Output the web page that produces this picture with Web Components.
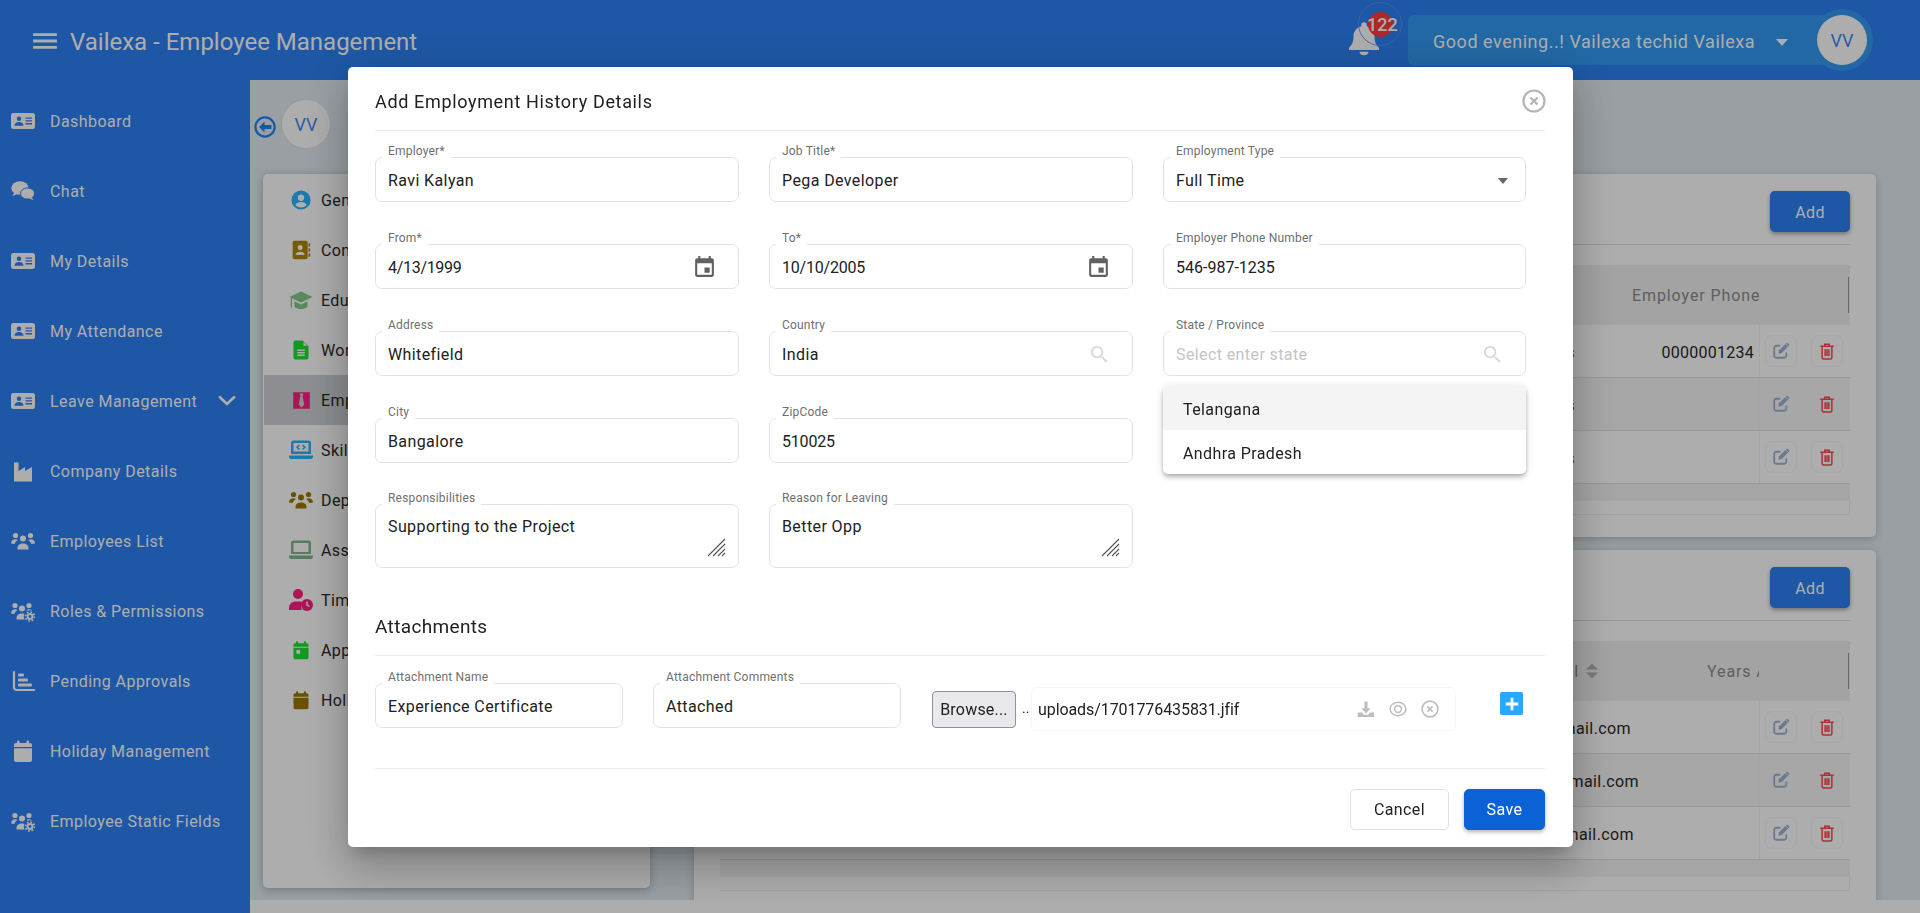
<!DOCTYPE html>
<html lang="en">
<head>
<meta charset="utf-8">
<title>Vailexa - Employee Management</title>
<style>
  html, body { margin: 0; height: 913px; overflow: hidden; }
  body { font-family: Roboto, "Liberation Sans", sans-serif; color: #292929; }
</style>
</head>
<body>

<vx-app>
  <vx-header slot="header"></vx-header>

  <vx-side-nav slot="nav">
    <vx-nav-item icon="idcard">Dashboard</vx-nav-item>
    <vx-nav-item icon="comments">Chat</vx-nav-item>
    <vx-nav-item icon="idcard">My Details</vx-nav-item>
    <vx-nav-item icon="idcard">My Attendance</vx-nav-item>
    <vx-nav-item icon="idcard" expandable>Leave Management</vx-nav-item>
    <vx-nav-item icon="industry">Company Details</vx-nav-item>
    <vx-nav-item icon="users">Employees List</vx-nav-item>
    <vx-nav-item icon="userscog">Roles &amp; Permissions</vx-nav-item>
    <vx-nav-item icon="bars">Pending Approvals</vx-nav-item>
    <vx-nav-item icon="calendar">Holiday Management</vx-nav-item>
    <vx-nav-item icon="userscog">Employee Static Fields</vx-nav-item>
  </vx-side-nav>

  <vx-content slot="main">
    <vx-profile-list slot="left">
      <vx-profile-item icon="usercircle" size="20" tint="#2ab4ff">General</vx-profile-item>
      <vx-profile-item icon="book" size="20" tint="#b08600">Contact</vx-profile-item>
      <vx-profile-item icon="cap" size="24" tint="#84c98c">Edu.</vx-profile-item>
      <vx-profile-item icon="file" size="20" tint="#1ee02e">Work</vx-profile-item>
      <vx-profile-item icon="tie" size="19" tint="#ff1e7f" selected>Employ</vx-profile-item>
      <vx-profile-item icon="laptopcode" size="24" tint="#2ab4ff">Skills</vx-profile-item>
      <vx-profile-item icon="users" size="24" tint="#9e7600">Deps</vx-profile-item>
      <vx-profile-item icon="laptop" size="24" tint="#84b58c">Assets</vx-profile-item>
      <vx-profile-item icon="userclock" size="24" tint="#ff1e7f">Time</vx-profile-item>
      <vx-profile-item icon="calendarbox" size="20" tint="#1ee02e">Apps</vx-profile-item>
      <vx-profile-item icon="calendar" size="20" tint="#9e7600">Holidays</vx-profile-item>
    </vx-profile-list>

    <vx-data-card slot="right" style="height:363px">
      <vx-table-head cols="1fr 184px 91px" first="" second="Employer Phone" inset="57"></vx-table-head>
      <vx-table-row cols="1fr 184px 91px" boxed>Services<span slot="value">0000001234</span></vx-table-row>
      <vx-table-row cols="1fr 184px 91px" even>Services</vx-table-row>
      <vx-table-row cols="1fr 184px 91px" boxed>Services</vx-table-row>
    </vx-data-card>

    <vx-data-card slot="right" style="height:400px">
      <vx-table-head cols="1fr 120px 91px" first="Email" endpad="38" second="Years At Company" inset="68" clip sort></vx-table-head>
      <vx-table-row cols="1fr 120px 91px" boxed pad="8">ravi.kalyan@gmail.com</vx-table-row>
      <vx-table-row cols="1fr 120px 91px" even>ravi.kalyan@gmail.com</vx-table-row>
      <vx-table-row cols="1fr 120px 91px" boxed pad="5">ravi.kalyan@gmail.com</vx-table-row>
    </vx-data-card>
  </vx-content>
</vx-app>

<vx-modal heading="Add Employment History Details">
  <vx-form-grid>
    <vx-field label="Employer*">Ravi Kalyan</vx-field>
    <vx-field label="Job Title*">Pega Developer</vx-field>
    <vx-field label="Employment Type">Full Time<vx-caret slot="trail"></vx-caret></vx-field>

    <vx-field label="From*" style="letter-spacing:-.3px">4/13/1999<vx-icon slot="trail" name="event" size="25" color="#616161"></vx-icon></vx-field>
    <vx-field label="To*" style="letter-spacing:-.2px">10/10/2005<vx-icon slot="trail" name="event" size="25" color="#616161"></vx-icon></vx-field>
    <vx-field label="Employer Phone Number" style="letter-spacing:0">546-987-1235</vx-field>

    <vx-field label="Address">Whitefield</vx-field>
    <vx-field label="Country">India<vx-icon slot="trail" name="search" size="23" color="#d9d9d9"></vx-icon></vx-field>
    <vx-field label="State / Province" placeholder="Select enter state">
      <vx-icon slot="trail" name="search" size="23" color="#d9d9d9"></vx-icon>
      <vx-dropdown slot="popup">
        <vx-option active>Telangana</vx-option>
        <vx-option>Andhra Pradesh</vx-option>
      </vx-dropdown>
    </vx-field>

    <vx-field label="City">Bangalore</vx-field>
    <vx-field label="ZipCode" style="letter-spacing:-.2px">510025</vx-field>
    <span></span>

    <vx-field label="Responsibilities" area>Supporting to the Project</vx-field>
    <vx-field label="Reason for Leaving" area>Better Opp</vx-field>
  </vx-form-grid>

  <vx-attachments>
    <vx-field slot="name" label="Attachment Name">Experience Certificate</vx-field>
    <vx-field slot="comments" label="Attachment Comments">Attached</vx-field>
    <span slot="file">uploads/1701776435831.jfif</span>
  </vx-attachments>

  <vx-button slot="actions" style="width:99px">Cancel</vx-button>
  <vx-button slot="actions" primary style="width:81px">Save</vx-button>
</vx-modal>

<script>
// Icon shapes on a 24 box. Holes come from the evenodd fill.
const ICONS = {
  idcard: '<path fill-rule="evenodd" d="M2.5 4h19A2.5 2.5 0 0 1 24 6.500v11a2.500 2.500 0 0 1-2.500 2.500h-19A2.500 2.500 0 0 1 0 17.500v-11A2.500 2.500 0 0 1 2.500 4z M8 7.500a2.300 2.300 0 1 0 0 4.600 2.300 2.300 0 0 0 0-4.600z M3.500 16.800c0-2.100 1.700-3.700 4.500-3.700s4.500 1.600 4.500 3.700z M14.500 8.500h6.500v1.300h-6.500z M14.500 11.300h6.500v1.300h-6.500z M14.500 14.100h6.500v1.300h-6.500z"/>',
  comments: '<ellipse cx="9" cy="9" rx="8.700" ry="6.700"/><path d="M3.500 13 1.500 17l5-2z"/><ellipse cx="16.500" cy="14.500" rx="7" ry="5.600" stroke="var(--cut,#fff)" stroke-width="1"/><path d="M20 18l3 3-5-1.500z"/>',
  industry: '<path d="M3 3.500h4.500v8.500l6.500-4v4l7-4v14.500H3z"/>',
  users: '<circle cx="12" cy="9.500" r="3"/><path d="M6.500 20.500v-1.600c0-2.600 2.300-4.400 5.500-4.400s5.500 1.800 5.500 4.400v1.600z"/><circle cx="4.500" cy="6.500" r="2.600"/><circle cx="19.500" cy="6.500" r="2.600"/><path d="M0 14.500c0-2.500 1.800-4.300 4.300-4.300 1 0 2 .3 2.600.9-1.500.9-2.800 2.200-3.200 3.900zM24 14.500c0-2.500-1.800-4.300-4.300-4.300-1 0-2 .3-2.600.9 1.500.9 2.800 2.200 3.200 3.900z"/>',
  userscog: '<circle cx="11" cy="9.500" r="3"/><path d="M5.500 20.500v-1.600c0-2.600 2.300-4.400 5.500-4.400s5.500 1.800 5.500 4.400v1.600z"/><circle cx="4" cy="6.500" r="2.600"/><circle cx="18" cy="6.500" r="2.600"/><path d="M0 14.500c0-2.500 1.800-4.300 4-4.300 1 0 2 .3 2.500.9-1.500.9-2.700 2.200-3.100 3.900zM22 14.500c0-2.500-1.800-4.300-4-4.300-1 0-2 .3-2.500.9 1.500.9 2.700 2.200 3.100 3.900z"/><circle cx="19" cy="17.500" r="6.200" fill="var(--cut,#fff)"/><circle cx="19" cy="17.500" r="3.400"/><circle cx="19" cy="17.500" r="4.500" fill="none" stroke="currentColor" stroke-width="1.700" stroke-dasharray="1.700 1.800"/><circle cx="19" cy="17.500" r="1.400" fill="var(--cut,#fff)"/>',
  bars: '<path d="M3 3v15.500a2.500 2.500 0 0 0 2.500 2.500H23" fill="none" stroke="currentColor" stroke-width="2.200" stroke-linecap="round"/><rect x="7" y="4.500" width="6" height="3" rx="1"/><rect x="7" y="9.500" width="10" height="3" rx="1"/><rect x="7" y="14.500" width="14" height="3" rx="1"/>',
  calendar: '<rect x="6" y="1.500" width="2.500" height="5" rx="1"/><rect x="15.500" y="1.500" width="2.500" height="5" rx="1"/><path d="M5 4h14a2 2 0 0 1 2 2v2H3V6a2 2 0 0 1 2-2zM3 9.200h18V21a2 2 0 0 1-2 2H5a2 2 0 0 1-2-2z"/>',
  calendarbox: '<rect x="6" y="1.500" width="2.500" height="5" rx="1"/><rect x="15.500" y="1.500" width="2.500" height="5" rx="1"/><path d="M5 4h14a2 2 0 0 1 2 2v2H3V6a2 2 0 0 1 2-2z"/><path fill-rule="evenodd" d="M3 9.200h18V21a2 2 0 0 1-2 2H5a2 2 0 0 1-2-2z M6.500 12v4.500H11V12z"/>',
  event: '<path d="M17 12h-5v5h5v-5zM16 1v2H8V1H6v2H5c-1.110 0-1.990.9-1.990 2L3 19c0 1.100.89 2 2 2h14c1.100 0 2-.9 2-2V5c0-1.100-.9-2-2-2h-1V1h-2zm3 18H5V8h14v11z"/>',
  search: '<path d="M15.500 14h-.79l-.28-.27C15.410 12.590 16 11.110 16 9.500 16 5.910 13.090 3 9.500 3S3 5.910 3 9.500 5.910 16 9.500 16c1.610 0 3.090-.59 4.230-1.570l.27.28v.79l5 4.990L20.490 19l-4.990-5zm-6 0C7.010 14 5 11.990 5 9.500S7.010 5 9.500 5 14 7.010 14 9.500 11.990 14 9.500 14z"/>',
  usercircle: '<path fill-rule="evenodd" d="M12 .5a11.500 11.500 0 1 0 0 23 11.500 11.500 0 0 0 0-23z M12 5.500a3.800 3.800 0 1 1 0 7.600 3.800 3.800 0 0 1 0-7.600z M5.300 18.200c.8-2.400 3.100-3.800 6.700-3.800s5.900 1.400 6.700 3.800a9.200 9.200 0 0 1-13.400 0z"/>',
  book: '<path fill-rule="evenodd" d="M4 1h14a2 2 0 0 1 2 2v18a2 2 0 0 1-2 2H4a2 2 0 0 1-2-2V3a2 2 0 0 1 2-2z M11 6a3 3 0 1 0 0 6 3 3 0 0 0 0-6z M5.500 18c0-2.300 2-4 5.500-4s5.500 1.700 5.500 4z"/><rect x="21" y="4" width="2" height="4"/><rect x="21" y="10" width="2" height="4"/><rect x="21" y="16" width="2" height="4"/>',
  cap: '<path d="M12 3.500.5 9 12 14.500 23.500 9z"/><path d="M5.500 13.300V18c0 1.600 3 3 6.500 3s6.500-1.400 6.500-3v-4.700L12 16.400z"/><rect x="1.800" y="10" width="1.200" height="9.500"/>',
  file: '<path fill-rule="evenodd" d="M5 .5h9l7 7V21a2.500 2.500 0 0 1-2.500 2.500h-13.500A2.500 2.500 0 0 1 3 21V2.500A2 2 0 0 1 5 .5z M15 2.500v4.500h4.500z M7.500 11.500h9v1.600h-9z M7.500 14.500h9v1.600h-9z M7.500 17.500h9v1.600h-9z"/>',
  tie: '<path fill-rule="evenodd" d="M1.500 1.500h21v21h-21z M9.500 3h5l-1.200 3.200 2.200 11-3.500 4-3.500-4 2.200-11z"/>',
  laptopcode: '<path fill-rule="evenodd" d="M4.500 2.500h15a2.500 2.500 0 0 1 2.500 2.500v11H2V5a2.500 2.500 0 0 1 2.500-2.500z M4.500 5v8.500h15V5z"/><path d="M0 17.500h24v1a2.500 2.500 0 0 1-2.500 2.500h-19A2.500 2.500 0 0 1 0 18.500z"/><path d="M10.500 7 8 9.200l2.500 2.200M13.500 7 16 9.200l-2.500 2.200" fill="none" stroke="currentColor" stroke-width="1.500"/>',
  laptop: '<path fill-rule="evenodd" d="M4.500 2.500h15a2.500 2.500 0 0 1 2.500 2.500v11H2V5a2.500 2.500 0 0 1 2.500-2.500z M4.500 5v9h15V5z"/><path d="M0 17.500h24v1a2.500 2.500 0 0 1-2.500 2.500h-19A2.500 2.500 0 0 1 0 18.500z"/>',
  userclock: '<circle cx="9" cy="6" r="5"/><path d="M0 22v-2c0-3.800 3-6.500 6.500-6.500h5c.9 0 1.700.2 2.400.5a7 7 0 0 0-.9 8z"/><circle cx="18" cy="17" r="6"/><path d="M18 13.500V17l2.500 1.500" fill="none" stroke="var(--cut,#fff)" stroke-width="1.400"/>',
  edit: '<path d="M10 5H5.500A2.500 2.500 0 0 0 3 7.500v11A2.500 2.500 0 0 0 5.500 21h11a2.500 2.500 0 0 0 2.500-2.500V15" fill="none" stroke="currentColor" stroke-width="2.400" stroke-linecap="round"/><path d="M8.500 15.500l1-4.500L18 2.500l3.500 3.500L13 14.500z"/><path d="M19 1.500a1.500 1.500 0 0 1 2.200 0l1.300 1.300a1.500 1.500 0 0 1 0 2.200l-.5.5L18.500 2z"/>',
  trash: '<path d="M3 5.500h18M9 5V3h6v2M5.500 5.500v15a2 2 0 0 0 2 2h9a2 2 0 0 0 2-2v-15M9.500 9.500v9M12 9.500v9M14.500 9.500v9" fill="none" stroke="currentColor" stroke-width="2"/>',
  bell: '<path d="M12 1.500A1.800 1.800 0 0 0 10.200 3.300v.9C7.300 5 5 7.500 5 11c0 4.800-1.700 6-3 7.500V20h20v-1.500c-1.300-1.500-3-2.700-3-7.500 0-3.500-2.300-6-5.200-6.800v-.9A1.800 1.800 0 0 0 12 1.500z"/><path d="M9 21.200a3 2.300 0 0 0 6 0z"/>',
  menu: '<path d="M1 4.800h22v2.600H1zM1 10.700h22v2.600H1zM1 16.600h22v2.600H1z"/>',
  chevron: '<path d="M3.500 7.500 12 15.500l8.500-8" fill="none" stroke="currentColor" stroke-width="3.200" stroke-linecap="round"/>',
  back: '<circle cx="12" cy="12" r="10.500" fill="none" stroke="currentColor" stroke-width="2.400"/><path d="M11.500 6 5.500 12l6 6v-3.800h7.500v-4.400h-7.500z"/>',
  close: '<circle cx="12" cy="12" r="10.500" fill="none" stroke="currentColor" stroke-width="2.200"/><path d="M8.500 8.500l7 7M15.500 8.500l-7 7" fill="none" stroke="currentColor" stroke-width="2.200"/>',
  download: '<path d="M10 2h4v9h4l-6 7-6-7h4z"/><path d="M1 16.500h6l2 3h6l2-3h6v6H1z"/>',
  eye: '<ellipse cx="12" cy="12" rx="10.500" ry="9" fill="none" stroke="currentColor" stroke-width="2"/><circle cx="12" cy="12" r="4.500" fill="none" stroke="currentColor" stroke-width="2"/>',
  plus: '<path d="M12 4.500v15M4.500 12h15" fill="none" stroke="currentColor" stroke-width="3.400"/>',
  sort: '<path d="M12 2 20 10H4zM12 22l-8-8h16z"/>'
};

class VxIcon extends HTMLElement {
  connectedCallback() {
    const size = this.getAttribute('size') || 24;
    const color = this.getAttribute('color') || 'currentColor';
    if (!this.shadowRoot) this.attachShadow({ mode: 'open' });
    this.shadowRoot.innerHTML = `
      <style>
        :host { display: inline-flex; flex: none; color: ${color}; }
        svg { display: block; fill: currentColor; }
      </style>
      <svg width="${size}" height="${size}" viewBox="0 0 24 24">${ICONS[this.getAttribute('name')] || ''}</svg>`;
  }
}

// Page frame: header on top, nav + content below, footer strip at the bottom
class VxApp extends HTMLElement {
  constructor() {
    super();
    this.attachShadow({ mode: 'open' });
    this.shadowRoot.innerHTML = `
      <style>
        :host { display: grid; grid-template: 80px 820px 13px / 250px 1fr; width: 1920px; height: 913px; background: #fff; }
        ::slotted([slot=header]) { grid-column: 1 / 3; }
        ::slotted([slot=nav]) { grid-row: 2 / 4; }
      </style>
      <slot name="header"></slot><slot name="nav"></slot><slot name="main"></slot>`;
  }
}

class VxHeader extends HTMLElement {
  constructor() {
    super();
    this.attachShadow({ mode: 'open' });
    this.shadowRoot.innerHTML = `
      <style>
        :host { display: flex; align-items: center; background: #2c81f4; color: #fff; padding: 0 47px 0 32px; }
        .menu { margin-top: 2px; }
        .title { font-size: 24px; margin: 3px 0 0 12px; }
        .bell { position: relative; width: 52px; height: 80px; margin-left: auto; margin-right: 7px; }
        .bell vx-icon { position: absolute; left: -3px; top: 20px; }
        .ring { position: absolute; left: 9px; top: 2px; width: 42px; height: 42px; border-radius: 50%; border: 1px solid rgba(90,150,240,.9); }
        .badge { position: absolute; left: 19px; top: 12px; width: 25px; height: 25px; border-radius: 50%; background: #ff3b3b; }
        .count { position: absolute; left: 18px; top: 14px; font-size: 18px; font-weight: 500; line-height: 21px; }
        .pill { display: flex; align-items: center; width: 422px; height: 50px; box-sizing: border-box; padding: 2px 0 0 25px; background: #329af3; border-radius: 6px; font-size: 18px; letter-spacing: .53px; }
        .pill b { font-weight: 400; }
        .caret { width: 0; height: 0; border: 6.5px solid transparent; border-top: 7px solid #fff; border-bottom: 0; margin-left: 21px; margin-top: 3px; }
        .ring2 { display: flex; align-items: center; justify-content: center; width: 62px; height: 62px; border-radius: 50%; background: #329af3; margin-left: -19px; }
        .avatar { display: flex; align-items: center; justify-content: center; width: 50px; height: 50px; border-radius: 50%; background: #fff; color: #4587f4; font-size: 18px; }
      </style>
      <vx-icon class="menu" name="menu" size="26"></vx-icon>
      <span class="title">Vailexa - Employee Management</span>
      <div class="bell">
        <vx-icon name="bell" size="36"></vx-icon>
        <span class="ring"></span><span class="badge"></span><span class="count">122</span>
      </div>
      <div class="pill"><b>Good evening..! Vailexa techid Vailexa</b><span class="caret"></span></div>
      <div class="ring2"><div class="avatar">VV</div></div>`;
  }
}

class VxSideNav extends HTMLElement {
  constructor() {
    super();
    this.attachShadow({ mode: 'open' });
    this.shadowRoot.innerHTML = `
      <style>
        :host { display: block; background: #2c81f4; padding-top: 6px; --cut: #2c81f4; }
      </style>
      <slot></slot>`;
  }
}

class VxNavItem extends HTMLElement {
  connectedCallback() {
    if (this.shadowRoot) return;
    this.attachShadow({ mode: 'open' });
    const more = this.hasAttribute('expandable')
      ? '<vx-icon class="more" name="chevron" size="20"></vx-icon>' : '';
    this.shadowRoot.innerHTML = `
      <style>
        :host { display: flex; align-items: center; height: 70px; padding-left: 11px; color: #fff; font-size: 16px; letter-spacing: .45px; }
        .txt { margin-left: 15px; }
        .more { margin-left: auto; margin-right: 13px; }
      </style>
      <vx-icon name="${this.getAttribute('icon')}" size="24"></vx-icon>
      <span class="txt"><slot></slot></span>${more}`;
  }
}

class VxContent extends HTMLElement {
  constructor() {
    super();
    this.attachShadow({ mode: 'open' });
    this.shadowRoot.innerHTML = `
      <style>
        :host { display: block; background: #e2eaf0; padding: 20px 44px 0 4px; overflow: hidden; }
        .top { display: flex; align-items: center; height: 48px; margin-bottom: 26px; color: #1a83ff; }
        .top vx-icon { margin-top: 6px; }
        .avatar { display: flex; align-items: center; justify-content: center; flex: none; width: 50px; height: 50px; box-sizing: border-box; margin-left: 5px; border-radius: 50%; background: #fff; border: 1px solid #e2e2e2; color: #4587f4; font-size: 18px; }
        .cols { display: flex; align-items: flex-start; }
        .left { margin-left: 9px; width: 387px; height: 714px; flex: none; }
        .right { display: flex; flex-direction: column; gap: 13px; margin-left: 44px; flex: 1; }
      </style>
      <div class="top"><vx-icon name="back" size="22"></vx-icon><div class="avatar">VV</div></div>
      <div class="cols">
        <div class="left"><slot name="left"></slot></div>
        <div class="right"><slot name="right"></slot></div>
      </div>`;
  }
}

class VxProfileList extends HTMLElement {
  constructor() {
    super();
    this.attachShadow({ mode: 'open' });
    this.shadowRoot.innerHTML = `
      <style>
        :host { display: block; height: 714px; box-sizing: border-box; padding: 1px; background: #fff; border-radius: 5px; box-shadow: 0 2px 8px rgba(0,0,0,.25); --cut: #fff; }
      </style>
      <slot></slot>`;
  }
}

class VxProfileItem extends HTMLElement {
  connectedCallback() {
    if (this.shadowRoot) return;
    this.attachShadow({ mode: 'open' });
    this.shadowRoot.innerHTML = `
      <style>
        :host { display: flex; align-items: center; height: 50px; padding-left: 25px; font-size: 16px; letter-spacing: .4px; color: #292929; }
        :host([selected]) { background: #ced2d6; }
        .ico { display: flex; justify-content: center; width: 24px; }
        .txt { margin-left: 8px; }
      </style>
      <span class="ico"><vx-icon name="${this.getAttribute('icon')}" size="${this.getAttribute('size')}" color="${this.getAttribute('tint')}"></vx-icon></span>
      <span class="txt"><slot></slot></span>`;
  }
}

class VxDataCard extends HTMLElement {
  constructor() {
    super();
    this.attachShadow({ mode: 'open' });
    this.shadowRoot.innerHTML = `
      <style>
        :host { display: block; box-sizing: border-box; background: #fff; border-radius: 5px; padding: 17px 26px 0; box-shadow: 0 2px 8px rgba(0,0,0,.2); }
        .top { display: flex; justify-content: flex-end; padding-bottom: 12px; border-bottom: 1px solid #dcdcdc; margin-bottom: 20px; }
        .add { display: flex; align-items: center; justify-content: center; width: 80px; height: 41px; box-sizing: border-box; padding-top: 2px; border-radius: 5px; background: #2c81f4; color: #fff; font-size: 16px; letter-spacing: .4px; box-shadow: 0 2px 4px rgba(0,0,0,.35); }
        .foot { height: 17px; background: #f4f4f4; }
        .end { height: 13px; border: solid #efefef; border-width: 0 1px 1px 0; }
      </style>
      <div class="top"><span class="add">Add</span></div>
      <slot></slot>
      <div class="foot"></div>
      <div class="end"></div>`;
  }
}

class VxTableHead extends HTMLElement {
  connectedCallback() {
    if (this.shadowRoot) return;
    this.attachShadow({ mode: 'open' });
    const sort = this.hasAttribute('sort') ? '<vx-icon name="sort" size="18" color="#b4b4b4"></vx-icon>' : '';
    const first = this.getAttribute('first');
    const clip = this.hasAttribute('clip') ? 'overflow: hidden;' : '';
    this.shadowRoot.innerHTML = `
      <style>
        :host { display: grid; grid-template-columns: ${this.getAttribute('cols')}; height: 60px; background: #f0f0f0; font-size: 16px; letter-spacing: .9px; color: #8c8c8c; align-items: center; }
        .one { display: flex; align-items: center; justify-content: flex-end; gap: 4px; padding-right: ${this.getAttribute('endpad') || 0}px; }
        .two { padding-left: ${this.getAttribute('inset')}px; white-space: nowrap; ${clip} }
        .rule { justify-self: end; width: 1px; height: 36px; margin-right: 1px; background: #999; }
      </style>
      <div class="one">${first ? `<span>${first}</span>` : ''}${sort}</div>
      <div class="two">${this.getAttribute('second')}</div>
      <div class="rule"></div>`;
  }
}

class VxTableRow extends HTMLElement {
  connectedCallback() {
    if (this.shadowRoot) return;
    this.attachShadow({ mode: 'open' });
    const boxed = this.hasAttribute('boxed');
    const pad = this.getAttribute('pad') || 0;
    const act = boxed ? 'act on' : 'act';
    this.shadowRoot.innerHTML = `
      <style>
        :host { display: grid; grid-template-columns: ${this.getAttribute('cols')}; height: 53px; box-sizing: border-box; border-bottom: 1px solid #dedfe8; background: #fff; font-size: 16px; letter-spacing: .4px; color: #292929; align-items: center; }
        :host([even]) { background: #f6f6f6; }
        .one { text-align: right; padding: 2px ${pad}px 0 0; white-space: nowrap; overflow: hidden; }
        .two { text-align: right; padding: 2px 5px 0 0; letter-spacing: .25px; }
        .acts { display: flex; align-items: center; justify-content: space-between; box-sizing: border-box; height: 100%; padding: 0 7px 0 5px; border-left: 1px solid #f3f3f3; }
        .act { display: flex; align-items: center; justify-content: center; width: 32px; height: 32px; box-sizing: border-box; border: 1px solid transparent; border-radius: 7px; }
        .act.on { border-color: #f6f6f6; }
      </style>
      <div class="one"><slot></slot></div>
      <div class="two"><slot name="value"></slot></div>
      <div class="acts">
        <span class="${act}"><vx-icon name="edit" size="18" color="#9db3d4"></vx-icon></span>
        <span class="${act}"><vx-icon name="trash" size="18" color="#ff4752"></vx-icon></span>
      </div>`;
  }
}

// Dialog with its dimmed backdrop
class VxModal extends HTMLElement {
  connectedCallback() {
    if (this.shadowRoot) return;
    this.attachShadow({ mode: 'open' });
    this.shadowRoot.innerHTML = `
      <style>
        :host { position: fixed; inset: 0; display: flex; justify-content: center; align-items: flex-start; padding: 67px 0 0 1px; background: rgba(0,0,0,.32); box-sizing: border-box; }
        .box { position: relative; width: 1225px; box-sizing: border-box; padding: 0 28px 0 27px; background: #fff; border-radius: 5px; color: #212121; box-shadow: 0 11px 15px -7px rgba(0,0,0,.2), 0 24px 38px 3px rgba(0,0,0,.14), 0 9px 46px 8px rgba(0,0,0,.12); }
        .head { display: flex; align-items: center; justify-content: space-between; height: 58px; padding-top: 5px; border-bottom: 1px solid #ececec; font-size: 18px; letter-spacing: .65px; }
        .head vx-icon { margin-right: -1px; }
        .actions { display: flex; justify-content: flex-end; gap: 15px; padding: 20px 0 17px; border-top: 1px solid #ececec; }
      </style>
      <div class="box">
        <div class="head"><span>${this.getAttribute('heading')}</span><vx-icon name="close" size="24" color="#b3b3b3"></vx-icon></div>
        <slot></slot>
        <div class="actions"><slot name="actions"></slot></div>
      </div>`;
  }
}

class VxFormGrid extends HTMLElement {
  constructor() {
    super();
    this.attachShadow({ mode: 'open' });
    this.shadowRoot.innerHTML = `
      <style>
        :host { display: grid; grid-template-columns: 364px 364px 363px; column-gap: 30px; row-gap: 42px; padding-top: 26px; }
      </style>
      <slot></slot>`;
  }
}

class VxField extends HTMLElement {
  connectedCallback() {
    if (this.shadowRoot) return;
    this.attachShadow({ mode: 'open' });
    const ph = this.getAttribute('placeholder');
    this.shadowRoot.innerHTML = `
      <style>
        :host { display: block; position: relative; height: 45px; box-sizing: border-box; border: 1px solid #e2e2e2; border-radius: 7px; background: #fff; font-size: 16px; letter-spacing: .4px; color: #212121; }
        :host([area]) { height: 64px; margin-top: -1px; }
        .lab { position: absolute; left: 6px; top: -14px; padding: 0 6px 1px; background: #fff; font-size: 12px; line-height: 15px; letter-spacing: .2px; color: #6f6f6f; white-space: nowrap; }
        .val { display: flex; align-items: center; justify-content: space-between; box-sizing: border-box; height: 100%; padding: 2px 21px 0 12px; white-space: nowrap; }
        :host([area]) .val { align-items: flex-start; padding-top: 12px; height: auto; }
        .ph { color: #c4c4c4; }
        .grip { position: absolute; right: 12px; bottom: 10px; display: none; }
        :host([area]) .grip { display: block; }
      </style>
      <span class="lab">${this.getAttribute('label')}</span>
      <div class="val"><span>${ph ? `<span class="ph">${ph}</span>` : ''}<slot></slot></span><slot name="trail"></slot></div>
      <svg class="grip" width="19" height="19" viewBox="0 0 19 19"><path d="M1 18 18 1M6 18 18 6M11 18l7-7M15 18l3-3" stroke="#555" stroke-width="1.100" fill="none"/></svg>
      <slot name="popup"></slot>`;
  }
}

class VxCaret extends HTMLElement {
  constructor() {
    super();
    this.attachShadow({ mode: 'open' });
    this.shadowRoot.innerHTML = `
      <style>
        :host { display: block; width: 0; height: 0; margin-right: -4px; border: 5.500px solid transparent; border-top: 6px solid #666; border-bottom: 0; }
      </style>`;
  }
}

class VxDropdown extends HTMLElement {
  constructor() {
    super();
    this.attachShadow({ mode: 'open' });
    this.shadowRoot.innerHTML = `
      <style>
        :host { position: absolute; left: -1px; right: -1px; top: 54px; z-index: 5; background: #fff; border-radius: 5px; overflow: hidden; box-shadow: 0 2px 4px -1px rgba(0,0,0,.2), 0 4px 5px rgba(0,0,0,.14), 0 1px 10px rgba(0,0,0,.12); }
      </style>
      <slot></slot>`;
  }
}

class VxOption extends HTMLElement {
  constructor() {
    super();
    this.attachShadow({ mode: 'open' });
    this.shadowRoot.innerHTML = `
      <style>
        :host { display: flex; align-items: center; height: 44px; box-sizing: border-box; padding: 2px 0 0 20px; font-size: 16px; letter-spacing: .4px; color: #212121; }
        :host([active]) { background: #f4f4f4; }
      </style>
      <slot></slot>`;
  }
}

class VxAttachments extends HTMLElement {
  constructor() {
    super();
    this.attachShadow({ mode: 'open' });
    this.shadowRoot.innerHTML = `
      <style>
        :host { display: block; }
        h3 { margin: 40px 0 0; height: 38px; line-height: 38px; padding-bottom: 9px; border-bottom: 1px solid #ececec; font-size: 19px; font-weight: 400; letter-spacing: .35px; }
        .row { display: flex; align-items: flex-start; height: 112px; box-sizing: border-box; padding-top: 27px; }
        ::slotted(vx-field) { width: 248px; flex: none; }
        ::slotted([slot=comments]) { margin-left: 30px; }
        .browse { display: flex; align-items: center; justify-content: center; flex: none; width: 84px; height: 37px; box-sizing: border-box; margin: 8px 0 0 31px; background: #e9e9ed; border: 1px solid #8f8f9d; border-radius: 4px; font-size: 16px; letter-spacing: .2px; }
        .dots { width: 15px; flex: none; margin-top: 17px; padding-left: 6px; box-sizing: border-box; font-size: 14px; }
        .file { display: flex; align-items: center; width: 425px; height: 44px; flex: none; box-sizing: border-box; margin-top: 4px; padding: 0 16px 0 6px; border: 1px solid #f6f6f6; border-radius: 6px; font-size: 16px; letter-spacing: -.08px; }
        .tools { display: flex; align-items: center; gap: 14px; margin-left: auto; color: #bdbdbd; }
        .plus { display: flex; align-items: center; justify-content: center; flex: none; width: 23px; height: 23px; margin: 9px 0 0 44px; border-radius: 2px; background: #29a8ff; color: #fff; }
      </style>
      <h3>Attachments</h3>
      <div class="row">
        <slot name="name"></slot>
        <slot name="comments"></slot>
        <span class="browse">Browse...</span>
        <span class="dots">..</span>
        <div class="file">
          <slot name="file"></slot>
          <span class="tools">
            <vx-icon name="download" size="18"></vx-icon>
            <vx-icon name="eye" size="18"></vx-icon>
            <vx-icon name="close" size="18"></vx-icon>
          </span>
        </div>
        <span class="plus"><vx-icon name="plus" size="20"></vx-icon></span>
      </div>`;
  }
}

class VxButton extends HTMLElement {
  constructor() {
    super();
    this.attachShadow({ mode: 'open' });
    this.shadowRoot.innerHTML = `
      <style>
        :host { display: flex; align-items: center; justify-content: center; height: 41px; box-sizing: border-box; border: 1px solid #e2e2e2; border-radius: 5px; font-size: 16px; letter-spacing: .4px; color: #212121; background: #fff; }
        :host([primary]) { background: #0b62d6; border-color: #0b62d6; color: #fff; box-shadow: 0 2px 4px rgba(0,0,0,.3); }
      </style>
      <slot></slot>`;
  }
}

// Register custom elements
customElements.define('vx-icon', VxIcon);
customElements.define('vx-app', VxApp);
customElements.define('vx-header', VxHeader);
customElements.define('vx-side-nav', VxSideNav);
customElements.define('vx-nav-item', VxNavItem);
customElements.define('vx-content', VxContent);
customElements.define('vx-profile-list', VxProfileList);
customElements.define('vx-profile-item', VxProfileItem);
customElements.define('vx-data-card', VxDataCard);
customElements.define('vx-table-head', VxTableHead);
customElements.define('vx-table-row', VxTableRow);
customElements.define('vx-modal', VxModal);
customElements.define('vx-form-grid', VxFormGrid);
customElements.define('vx-field', VxField);
customElements.define('vx-caret', VxCaret);
customElements.define('vx-dropdown', VxDropdown);
customElements.define('vx-option', VxOption);
customElements.define('vx-attachments', VxAttachments);
customElements.define('vx-button', VxButton);
</script>
</body>
</html>
